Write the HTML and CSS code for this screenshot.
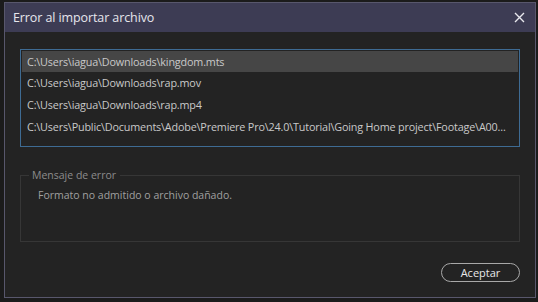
FILE: index.html
```html
<!DOCTYPE html>
<html lang="es">
<head>
<meta charset="utf-8">
<title>Error al importar archivo</title>
<link rel="stylesheet" href="styles.css">
</head>
<body>
<div class="dialog">
  <div class="titlebar">
    <span class="title">Error al importar archivo</span>
    <svg class="close" width="11" height="11" viewBox="0 0 11 11"><path d="M1 1L10 10M10 1L1 10" stroke="#e8e8ee" stroke-width="1.4" fill="none"/></svg>
  </div>
  <div class="content">
    <div class="filelist">
      <div class="row selected">C:\Users\iagua\Downloads\kingdom.mts</div>
      <div class="row">C:\Users\iagua\Downloads\rap.mov</div>
      <div class="row">C:\Users\iagua\Downloads\rap.mp4</div>
      <div class="row">C:\Users\Public\Documents\Adobe\Premiere Pro\24.0\Tutorial\Going Home project\Footage\A00...</div>
    </div>
    <div class="group">
      <span class="legend">Mensaje de error</span>
      <div class="message">Formato no admitido o archivo dañado.</div>
    </div>
    <div class="actions">
      <button class="btn">Aceptar</button>
    </div>
  </div>
</div>
</body>
</html>
```
FILE: styles.css
```css
html, body {
  margin: 0;
  padding: 0;
  background: #1b1b1b;
  width: 538px;
  height: 302px;
  overflow: hidden;
  font-family: "Open Sans", "Noto Sans", sans-serif;
}
.dialog {
  box-sizing: border-box;
  width: 532px;
  height: 296px;
  margin: 2px 0 0 4px;
  border: 1px solid #58576c;
  background: #232323;
  display: flex;
  flex-direction: column;
}
.titlebar {
  height: 29px;
  background: #3d3c54;
  display: flex;
  align-items: center;
  justify-content: space-between;
  padding: 0 10px 0 8px;
  flex-shrink: 0;
}
.title {
  color: #e6e6ec;
  font-size: 12.5px;
  letter-spacing: -0.1px;
}
.close {
  display: block;
}
.content {
  padding: 17px 15px 0 15px;
  display: flex;
  flex-direction: column;
}
.filelist {
  box-sizing: border-box;
  height: 98px;
  border: 1px solid #3e6b93;
  padding: 1px;
}
.row {
  height: 22px;
  line-height: 22px;
  padding-left: 5px;
  color: #c9c9c9;
  font-size: 10.8px;
  white-space: nowrap;
  overflow: hidden;
  letter-spacing: -0.17px;
}
.row.selected {
  height: 21px;
  line-height: 21px;
  background: #464646;
}
.group {
  box-sizing: border-box;
  margin-top: 28px;
  height: 67px;
  border: 1px solid #363636;
  padding: 0 0 0 17px;
  font-size: 10.5px;
  line-height: 16px;
}
.legend {
  display: block;
  width: fit-content;
  margin: -9px 0 0 -9px;
  padding: 0 4px 0 3px;
  background: #232323;
  color: #8c8c8c;
  font-size: 10.5px;
  line-height: 16px;
}
.message {
  margin-top: 4px;
  color: #a0a0a0;
  font-size: 10.5px;
  line-height: 16px;
}
.actions {
  display: flex;
  justify-content: flex-end;
  margin-top: 21px;
}
.btn {
  box-sizing: border-box;
  width: 79px;
  height: 19px;
  border: 1px solid #a8a8a8;
  border-radius: 10px;
  background: transparent;
  color: #e8e8e8;
  font-family: "Open Sans", "Noto Sans", sans-serif;
  font-size: 11px;
  padding: 0;
  line-height: 17px;
}
```
